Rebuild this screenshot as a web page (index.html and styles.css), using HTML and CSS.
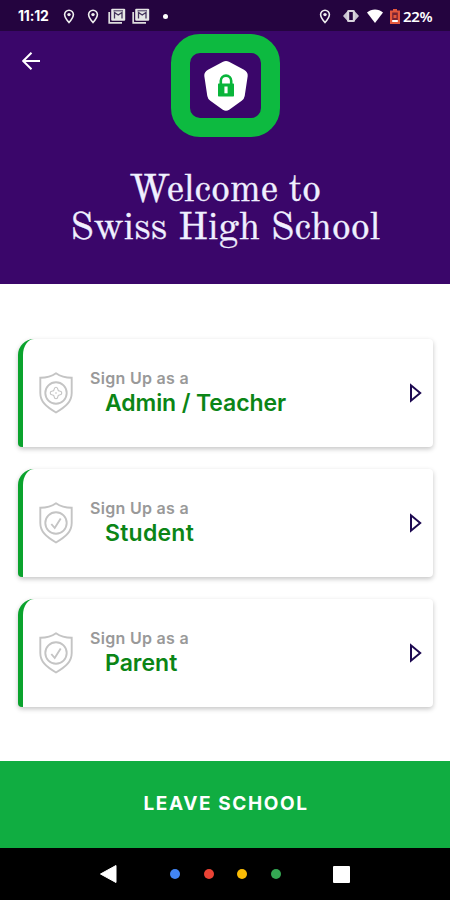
FILE: index.html
```html
<!DOCTYPE html>
<html lang="en">
<head>
<meta charset="utf-8">
<title>Swiss High School</title>
<link rel="stylesheet" href="styles.css">
</head>
<body>
<svg class="defs" width="0" height="0">
  <symbol id="pin" viewBox="0 0 12 15"><path d="M6 1.200a4.400 4.400 0 0 0-4.400 4.400C1.600 8.800 6 13.500 6 13.500s4.400-4.700 4.400-7.900A4.400 4.400 0 0 0 6 1.200z" fill="none" stroke="#eee" stroke-width="1.600"/><circle cx="6" cy="5.600" r="1.700" fill="#eee"/></symbol>
  <symbol id="news" viewBox="0 0 18 16"><path d="M1.200 4v10.800H14" fill="none" stroke="#ddd" stroke-width="1.700"/><rect x="3.200" y="0.800" width="14" height="12" rx="1" fill="#e6e6e6"/><path d="M6.500 10.500v-6l3.700 2.500L14 4.500v6" fill="none" stroke="#44345c" stroke-width="1.300"/><path d="M5.500 2.800h9.500" stroke="#44345c"/></symbol>
  <symbol id="shield" viewBox="0 0 34 42"><path d="M17 1.300C12.500 4.500 7.500 5.800 1.300 5.800V21c0 8.500 5.500 13.500 15.700 19.500C27.200 34.500 32.700 29.500 32.700 21V5.800C26.500 5.800 21.500 4.500 17 1.300z"/><circle cx="17" cy="21" r="10.700"/></symbol>
</svg>
<div class="status">
  <span class="time">11:12</span>
  <svg class="pin"><use href="#pin"/></svg>
  <svg class="pin second"><use href="#pin"/></svg>
  <svg class="news"><use href="#news"/></svg>
  <svg class="news last"><use href="#news"/></svg>
  <i class="more"></i>
  <svg class="pin right"><use href="#pin"/></svg>
  <svg class="vibrate" viewBox="0 0 16 14"><path d="M4.500 2 0 7l4.500 5zM11.500 2 16 7l-4.500 5z" fill="#c9c3d0"/><rect x="4" y="1" width="8" height="12" rx="1.500" fill="#d8d4dc"/><rect x="6.200" y="3" width="3.600" height="8" fill="#24043f"/></svg>
  <svg class="wifi" viewBox="0 0 16 14"><path d="M0 3.500C4.500-.5 11.500-.5 16 3.500L8 14z" fill="#fff"/></svg>
  <svg class="battery" viewBox="0 0 10 15"><path d="M3 0h4v1.500h3V15H0V1.500h3z" fill="#e3583d"/><path d="M2.200 3.500h5.600V11H2.200z" fill="#772333"/><path d="M2.200 11h5.600v2H2.200z" fill="#fff"/><path d="M3.500 6h3v3h-3z" fill="#e3583d"/></svg>
  <span class="percent">22%</span>
</div>
<header class="header">
  <svg class="back" viewBox="0 0 18 18"><path d="M18 9H1M9.500.7 1.200 9l8.300 8.300" fill="none" stroke="#fff" stroke-width="2"/></svg>
  <div class="logo">
    <svg viewBox="0 0 46 52"><path d="M20 1.700q3-1.500 6 0l15 8q4 2.200 3.700 6.300l-3 20q-.5 3-3 4.800l-12.500 9q-3.200 2-6.400 0l-12.500-9q-2.500-1.800-3-4.800L1.300 16Q1 11.900 5 9.700z" fill="#fff"/><path d="M17.800 25v-4.200a5.200 5.200 0 0 1 10.400 0V25" fill="none" stroke="#09b53a" stroke-width="2.600"/><rect x="15" y="23.500" width="16" height="13" rx=".7" fill="#09b53a"/><path d="M21.400 26.500h3.200v6.800h-3.200z" fill="#fff"/></svg>
  </div>
  <h1><span>Welcome to</span><span>Swiss High School</span></h1>
</header>
<main class="cards">
  <div class="card">
    <svg class="shield"><use href="#shield"/><path d="M17 15.300c2.500 0 1.500 3 2.500 3.500s3.300 0 3.300 2.200-2.300 1.700-3.300 2.200 0 3.500-2.500 3.500-1.500-3-2.500-3.500-3.300 0-3.300-2.200 2.300-1.700 3.300-2.200 0-3.500 2.500-3.500z" stroke-width="1.100"/><circle cx="17" cy="21" r=".5" stroke-width=".8"/></svg>
    <div class="label"><span class="small">Sign Up as a</span><span class="role admin">Admin / Teacher</span></div>
    <svg class="arrow" viewBox="0 0 13 20"><path d="M2 2.300v15.400L11.200 10z" fill="none" stroke="#1c0850" stroke-width="2"/></svg>
  </div>
  <div class="card">
    <svg class="shield"><use href="#shield"/><path d="m12.300 22 3.400 4L21.700 16.500"/></svg>
    <div class="label"><span class="small">Sign Up as a</span><span class="role student">Student</span></div>
    <svg class="arrow" viewBox="0 0 13 20"><path d="M2 2.300v15.400L11.200 10z" fill="none" stroke="#1c0850" stroke-width="2"/></svg>
  </div>
  <div class="card">
    <svg class="shield"><use href="#shield"/><path d="m12.300 22 3.400 4L21.700 16.500"/></svg>
    <div class="label"><span class="small">Sign Up as a</span><span class="role">Parent</span></div>
    <svg class="arrow" viewBox="0 0 13 20"><path d="M2 2.300v15.400L11.200 10z" fill="none" stroke="#1c0850" stroke-width="2"/></svg>
  </div>
</main>
<button class="leave">LEAVE SCHOOL</button>
<nav class="nav">
  <svg class="tri" viewBox="0 0 17 18"><path d="M16 .5v17L.5 9z" fill="#fff" stroke="#fff" stroke-linejoin="round"/></svg>
  <div class="dots"><i class="blue"></i><i class="red"></i><i class="yellow"></i><i class="green"></i></div>
  <i class="square"></i>
</nav>
</body>
</html>
```
FILE: styles.css
```css
* { box-sizing: border-box; }
body { margin: 0; width: 450px; height: 900px; display: flex; flex-direction: column; background: #fff; font-family: Inter, sans-serif; overflow: hidden; }
.defs { position: absolute; }
.status { height: 31px; flex: none; background: #24043f; display: flex; align-items: center; color: #fff; padding: 1px 17px 0 18px; font: 700 14px/30px Roboto, sans-serif; }
.time { width: 45px; letter-spacing: -.2px; font-family: Inter, sans-serif; }
.pin { width: 12px; height: 15px; flex: none; }
.second { margin-left: 12px; }
.news { width: 18px; height: 16px; margin-left: 9px; flex: none; }
.news.last { margin-left: 6px; }
.more { width: 5px; height: 5px; border-radius: 50%; background: #fff; margin-left: 13px; }
.pin.right { margin-left: auto; }
.vibrate { width: 16px; height: 14px; margin-left: 12px; }
.wifi { width: 16px; height: 14px; margin-left: 8px; }
.battery { width: 10px; height: 15px; margin-left: 7px; }
.percent { margin-left: 3px; width: 30px; font-size: 15px; line-height: 28px; font-weight: 600; font-family: "Noto Sans", sans-serif; letter-spacing: -.3px; }
.header { height: 253px; flex: none; background: #3a066a; display: grid; grid-template-columns: 171px 109px 1fr; grid-template-rows: 141px 1fr; }
.back { width: 18px; height: 18px; margin: 21px 0 0 22px; }
.logo { width: 109px; height: 103px; margin-top: 3px; border: 19px solid #0dba40; border-radius: 29px; display: flex; align-items: center; justify-content: center; }
.logo svg { width: 46px; height: 52px; }
h1 { grid-column: 1 / 4; margin: 0; text-align: center; color: #f0f0ff; font: 400 38.600px/38px "Old Standard TT", "Liberation Serif", serif; letter-spacing: -.15px; -webkit-text-stroke: .4px #f0f0ff; }
h1 span { display: block; white-space: nowrap; }
.cards { height: 477px; flex: none; padding: 55px 17px 0 18px; display: flex; flex-direction: column; gap: 22px; }
.card { height: 108px; flex: none; border-left: 5px solid #0aa32d; border-radius: 16px 4px 4px 4px; background: #fff; box-shadow: 0 2px 5px rgba(0,0,0,.23); display: flex; align-items: center; padding: 0 11px 0 16px; }
.shield { width: 34px; height: 42px; fill: none; stroke: #c4c4c4; stroke-width: 1.900; flex: none; }
.label { margin-left: 17px; flex: 1; display: flex; flex-direction: column; margin-top: -1px; }
.small { font-size: 16px; line-height: 20px; font-weight: 600; color: #999; letter-spacing: .3px; white-space: nowrap; }
.role { margin-left: 15px; font-size: 23px; line-height: 30px; font-weight: 600; color: #0b8516; white-space: nowrap; }
.admin { letter-spacing: -.1px; }
.student { letter-spacing: .25px; }
.arrow { width: 13px; height: 20px; flex: none; }
.leave { height: 87px; flex: none; border: 0; background: #10ad41; color: #fff; font: 700 19px/1 Inter, sans-serif; letter-spacing: 1.600px; padding: 0 0 2px 2px; }
.nav { height: 52px; flex: none; background: #000; display: flex; align-items: center; padding-left: 100px; }
.tri { width: 17px; height: 18px; }
.dots { display: flex; margin-left: 53px; gap: 23.500px; }
.dots i { width: 10px; height: 10px; border-radius: 50%; }
.blue { background: #4285f4; }
.red { background: #ea4335; }
.yellow { background: #fbbc05; }
.green { background: #34a853; }
.square { width: 17px; height: 17px; border-radius: 1px; background: #fff; margin-left: 52px; }
```
